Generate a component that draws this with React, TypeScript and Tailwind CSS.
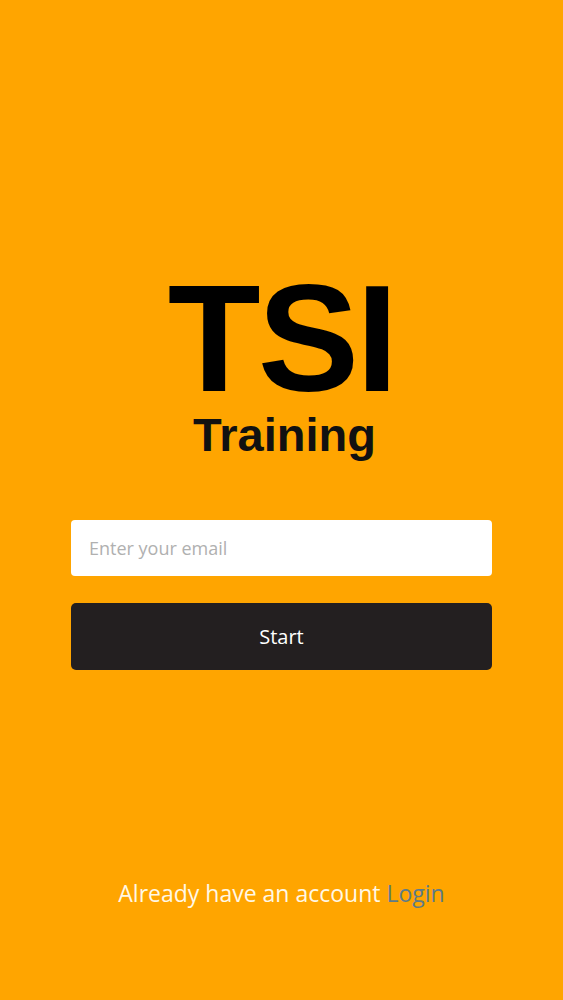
import React from "react";

export default function App() {
  return (
    <div className="w-full h-[1000px] bg-[#ffa500] flex flex-col items-center">
      <div className="h-[272px]" />
      <div className="text-black font-bold leading-[132px] tracking-[-0.02em] text-[152px] font-['Liberation_Sans',Arial,sans-serif]">
        TSI
      </div>
      <div className="text-[#111] font-bold leading-none text-[47px] mt-[7px] ml-[6px] font-['Liberation_Sans',Arial,sans-serif]">
        Training
      </div>
      <div className="w-[421px] mt-[62px] flex flex-col gap-[27px] font-['Open_Sans',sans-serif]">
        <input
          type="email"
          placeholder="Enter your email"
          className="w-full h-[56px] bg-white rounded-[4px] px-[18px] text-[18px] text-[#333] placeholder:text-[#b0b0b0] outline-none"
        />
        <button className="w-full h-[67px] bg-[#231f20] rounded-[5px] text-white text-[20px]">
          Start
        </button>
      </div>
      <div className="flex-1" />
      <div className="text-[23px] text-[#fff8e6] mb-[90px] font-['Open_Sans',sans-serif]">
        Already have an account <span className="text-[#5d7b88]">Login</span>
      </div>
    </div>
  );
}
